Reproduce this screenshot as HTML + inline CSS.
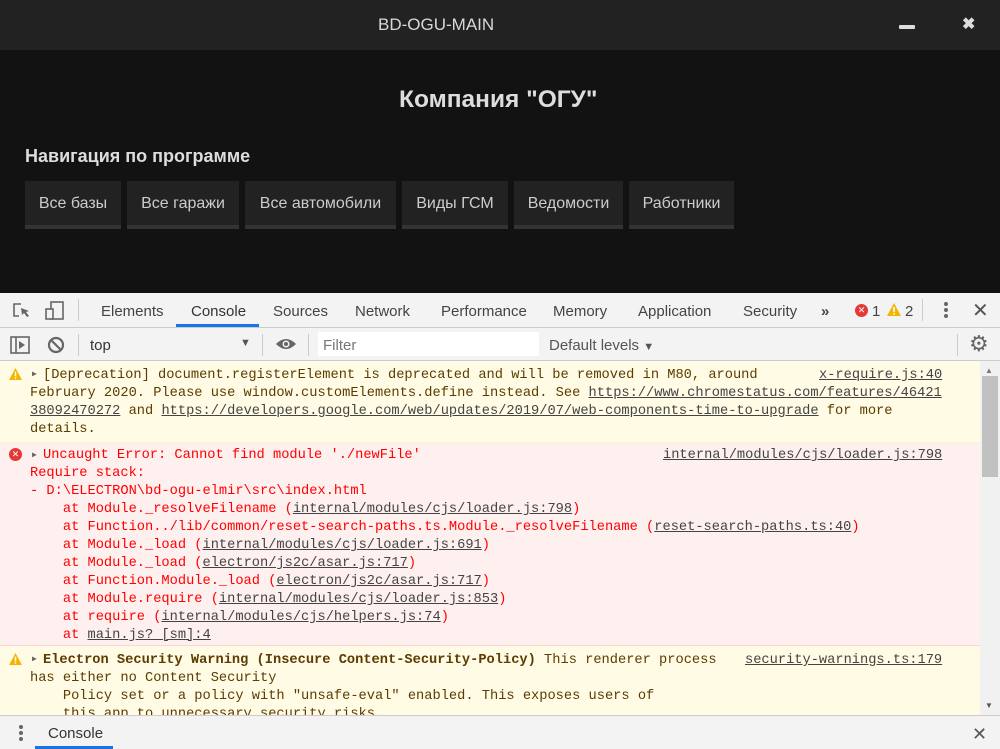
<!DOCTYPE html>
<html><head><meta charset="utf-8"><style>
*{margin:0;padding:0;box-sizing:border-box}
body{width:1000px;height:749px;overflow:hidden;background:#121212;font-family:"Liberation Sans",Arial,sans-serif;position:relative}
.abs{position:absolute}
.title{left:378px;top:0;height:50px;color:#d8d8d8;font-size:17px;line-height:50px}
.h1{top:86px;left:399px;color:#ddd;font-size:24.5px;font-weight:bold;white-space:nowrap}
.h2{top:146px;left:25px;color:#ddd;font-size:18px;font-weight:bold}
.btn{top:181px;height:48px;background:#222;border-bottom:4px solid #333;color:#ccc;font-size:16px;line-height:46px;text-align:center}
.dt{left:0;top:293px;width:1000px;height:456px;background:#fff}
.tabs{left:0;top:293px;width:1000px;height:35px;background:#f3f3f3;border-bottom:1px solid #ccc;font-size:15px;color:#333}
.tab{top:10px;color:#444}
.tb{left:0;top:328px;width:1000px;height:33px;background:#f3f3f3;border-bottom:1px solid #ccc;font-size:15px;color:#333}
.mono{font-family:"Liberation Mono",monospace;font-size:13.7px;white-space:pre;line-height:18px}
.warn{background:#fffbe5;color:#5c3c00;border-bottom:1px solid #fff5c2}
.err{background:#fff0f0;color:#f00;border-bottom:1px solid #ffd6d6}
.u{text-decoration:underline;color:#444}
.ln{position:absolute}
</style></head><body>
<div class="abs" style="left:0;top:0;width:1000px;height:50px;background:#222"></div>
<div class="abs title">BD-OGU-MAIN</div>
<div class="abs" style="left:899px;top:25px;width:16px;height:4px;background:#ddd;border-radius:1px"></div>
<div class="abs" style="left:962px;top:14px;color:#ddd;font-size:16px;font-weight:bold">✖</div>
<div class="abs h1">Компания "ОГУ"</div>
<div class="abs h2">Навигация по программе</div>
<div class="abs btn" style="left:25px;width:96px">Все базы</div>
<div class="abs btn" style="left:127px;width:112px">Все гаражи</div>
<div class="abs btn" style="left:245px;width:151px">Все автомобили</div>
<div class="abs btn" style="left:402px;width:106px">Виды ГСМ</div>
<div class="abs btn" style="left:514px;width:109px">Ведомости</div>
<div class="abs btn" style="left:629px;width:105px">Работники</div>

<div class="abs dt"></div>
<div class="abs tabs">
 <svg class="abs" style="left:12px;top:8px" width="20" height="20" viewBox="0 0 20 20"><path d="M9 3H2v12h5" fill="none" stroke="#666" stroke-width="1.6"/><path d="M9 7l8 3-3 1 3 4-2 1-3-4-2 2z" fill="#666"/></svg>
 <svg class="abs" style="left:44px;top:7px" width="22" height="22" viewBox="0 0 22 22"><rect x="7" y="2" width="12" height="17" fill="none" stroke="#666" stroke-width="1.6"/><rect x="2" y="9" width="7" height="10" fill="#f3f3f3" stroke="#666" stroke-width="1.6"/></svg>
 <div class="abs" style="left:78px;top:6px;width:1px;height:22px;background:#ccc"></div>
 <span class="abs tab" style="left:101px">Elements</span>
 <span class="abs tab" style="left:191px;color:#333">Console</span>
 <div class="abs" style="left:176px;top:31px;width:83px;height:3px;background:#1a73e8"></div>
 <span class="abs tab" style="left:273px">Sources</span>
 <span class="abs tab" style="left:355px">Network</span>
 <span class="abs tab" style="left:441px">Performance</span>
 <span class="abs tab" style="left:553px">Memory</span>
 <span class="abs tab" style="left:638px">Application</span>
 <span class="abs tab" style="left:743px">Security</span>
 <span class="abs tab" style="left:821px;font-weight:bold">»</span>
 <div class="abs" style="left:855px;top:11px;width:13px;height:13px;border-radius:50%;background:#e53935;color:#fff;font-size:9px;line-height:13px;text-align:center">✕</div>
 <span class="abs tab" style="left:872px">1</span>
 <svg class="abs" style="left:887px;top:10px" width="14" height="13" viewBox="0 0 14 13"><path d="M7 0L14 13H0z" fill="#f4b400"/><rect x="6.2" y="4" width="1.6" height="5" fill="#fff"/><rect x="6.2" y="10" width="1.6" height="1.6" fill="#fff"/></svg>
 <span class="abs tab" style="left:905px">2</span>
 <div class="abs" style="left:922px;top:6px;width:1px;height:22px;background:#ccc"></div>
 <div class="abs" style="left:944px;top:9px;width:4px;height:4px;border-radius:50%;background:#666;box-shadow:0 6px 0 #666,0 12px 0 #666"></div>
 <div class="abs" style="left:972px;top:5px;font-size:20px;color:#555">✕</div>
</div>
<div class="abs tb">
 <svg class="abs" style="left:10px;top:8px" width="20" height="18" viewBox="0 0 20 18"><rect x="1" y="1" width="18" height="16" fill="none" stroke="#666" stroke-width="1.6"/><line x1="6" y1="1" x2="6" y2="17" stroke="#666" stroke-width="1.6"/><path d="M9 5l6 4-6 4z" fill="#666"/></svg>
 <svg class="abs" style="left:47px;top:8px" width="18" height="18" viewBox="0 0 18 18"><circle cx="9" cy="9" r="7" fill="none" stroke="#666" stroke-width="2.2"/><line x1="4" y1="4" x2="14" y2="14" stroke="#666" stroke-width="2.2"/></svg>
 <div class="abs" style="left:78px;top:6px;width:1px;height:22px;background:#ccc"></div>
 <span class="abs" style="left:90px;top:9px">top</span>
 <span class="abs" style="left:240px;top:9px;font-size:11px;color:#555">▼</span>
 <div class="abs" style="left:262px;top:6px;width:1px;height:22px;background:#ccc"></div>
 <svg class="abs" style="left:275px;top:9px" width="22" height="14" viewBox="0 0 22 14"><path d="M1 7Q11 -3 21 7Q11 17 1 7z" fill="#666"/><circle cx="11" cy="7" r="3.5" fill="#f3f3f3"/><circle cx="11" cy="7" r="2" fill="#666"/></svg>
 <div class="abs" style="left:308px;top:6px;width:1px;height:22px;background:#ccc"></div>
 <div class="abs" style="left:318px;top:4px;width:221px;height:24px;background:#fff"></div>
 <span class="abs" style="left:323px;top:9px;color:#777">Filter</span>
 <span class="abs" style="left:549px;top:9px;color:#555">Default levels <span style="font-size:11px">▼</span></span>
 <div class="abs" style="left:957px;top:6px;width:1px;height:22px;background:#ccc"></div>
 <div class="abs" style="left:969px;top:3px;font-size:22px;color:#666">⚙</div>
</div>

<div class="abs mono warn" style="left:0;top:361px;width:980px;height:82px">
 <svg class="ln" style="left:9px;top:7px" width="13" height="12" viewBox="0 0 14 13"><path d="M7 0L14 13H0z" fill="#f4b400"/><rect x="6.2" y="4" width="1.6" height="5" fill="#fff"/><rect x="6.2" y="10" width="1.6" height="1.6" fill="#fff"/></svg>
 <span class="ln" style="left:32px;top:10px;font-size:8px;line-height:8px;color:#666">▶</span>
 <span class="ln" style="left:43px;top:6px">[Deprecation] document.registerElement is deprecated and will be removed in M80, around</span>
 <span class="ln u" style="left:819px;top:6px">x-require.js:40</span>
 <span class="ln" style="left:30px;top:24px">February 2020. Please use window.customElements.define instead. See <span class="u">https://www.chromestatus.com/features/46421</span></span>
 <span class="ln" style="left:30px;top:42px"><span class="u">38092470272</span> and <span class="u">https://developers.google.com/web/updates/2019/07/web-components-time-to-upgrade</span> for more</span>
 <span class="ln" style="left:30px;top:60px">details.</span>
</div>
<div class="abs mono err" style="left:0;top:443px;width:980px;height:203px">
 <div class="ln" style="left:9px;top:5px;width:13px;height:13px;border-radius:50%;background:#e53935;color:#fff;font-family:'Liberation Sans';font-size:9px;line-height:13px;text-align:center">✕</div>
 <span class="ln" style="left:32px;top:9px;font-size:8px;line-height:8px;color:#666">▶</span>
 <span class="ln" style="left:43px;top:4px">Uncaught Error: Cannot find module './newFile'</span>
 <span class="ln u" style="left:663px;top:4px">internal/modules/cjs/loader.js:798</span>
 <span class="ln" style="left:30px;top:22px">Require stack:
- D:\ELECTRON\bd-ogu-elmir\src\index.html
    at Module._resolveFilename (<span class="u">internal/modules/cjs/loader.js:798</span>)
    at Function../lib/common/reset-search-paths.ts.Module._resolveFilename (<span class="u">reset-search-paths.ts:40</span>)
    at Module._load (<span class="u">internal/modules/cjs/loader.js:691</span>)
    at Module._load (<span class="u">electron/js2c/asar.js:717</span>)
    at Function.Module._load (<span class="u">electron/js2c/asar.js:717</span>)
    at Module.require (<span class="u">internal/modules/cjs/loader.js:853</span>)
    at require (<span class="u">internal/modules/cjs/helpers.js:74</span>)
    at <span class="u">main.js? [sm]:4</span></span>
</div>
<div class="abs mono warn" style="left:0;top:646px;width:980px;height:70px;overflow:hidden;border:none">
 <svg class="ln" style="left:9px;top:7px" width="13" height="12" viewBox="0 0 14 13"><path d="M7 0L14 13H0z" fill="#f4b400"/><rect x="6.2" y="4" width="1.6" height="5" fill="#fff"/><rect x="6.2" y="10" width="1.6" height="1.6" fill="#fff"/></svg>
 <span class="ln" style="left:32px;top:10px;font-size:8px;line-height:8px;color:#666">▶</span>
 <span class="ln" style="left:43px;top:6px"><b>Electron Security Warning (Insecure Content-Security-Policy)</b> This renderer process</span>
 <span class="ln u" style="left:745px;top:6px">security-warnings.ts:179</span>
 <span class="ln" style="left:30px;top:24px">has either no Content Security
    Policy set or a policy with "unsafe-eval" enabled. This exposes users of
    this app to unnecessary security risks.</span>
</div>
<div class="abs" style="left:980px;top:361px;width:20px;height:355px;background:#f1f1f1"></div>
<div class="abs" style="left:982px;top:376px;width:16px;height:101px;background:#c1c1c1"></div>
<div class="abs" style="left:985px;top:366px;font-size:8px;color:#777">▲</div>
<div class="abs" style="left:985px;top:701px;font-size:8px;color:#555">▼</div>
<div class="abs" style="left:0;top:715px;width:1000px;height:34px;background:#f3f3f3;border-top:1px solid #ccc"></div>
<div class="abs" style="left:19px;top:725px;width:4px;height:4px;border-radius:50%;background:#666;box-shadow:0 6px 0 #666,0 12px 0 #666"></div>
<span class="abs" style="left:48px;top:725px;font-size:15px;color:#333">Console</span>
<div class="abs" style="left:35px;top:746px;width:78px;height:3px;background:#1a73e8"></div>
<div class="abs" style="left:972px;top:724px;font-size:18px;color:#555">✕</div>
</body></html>
